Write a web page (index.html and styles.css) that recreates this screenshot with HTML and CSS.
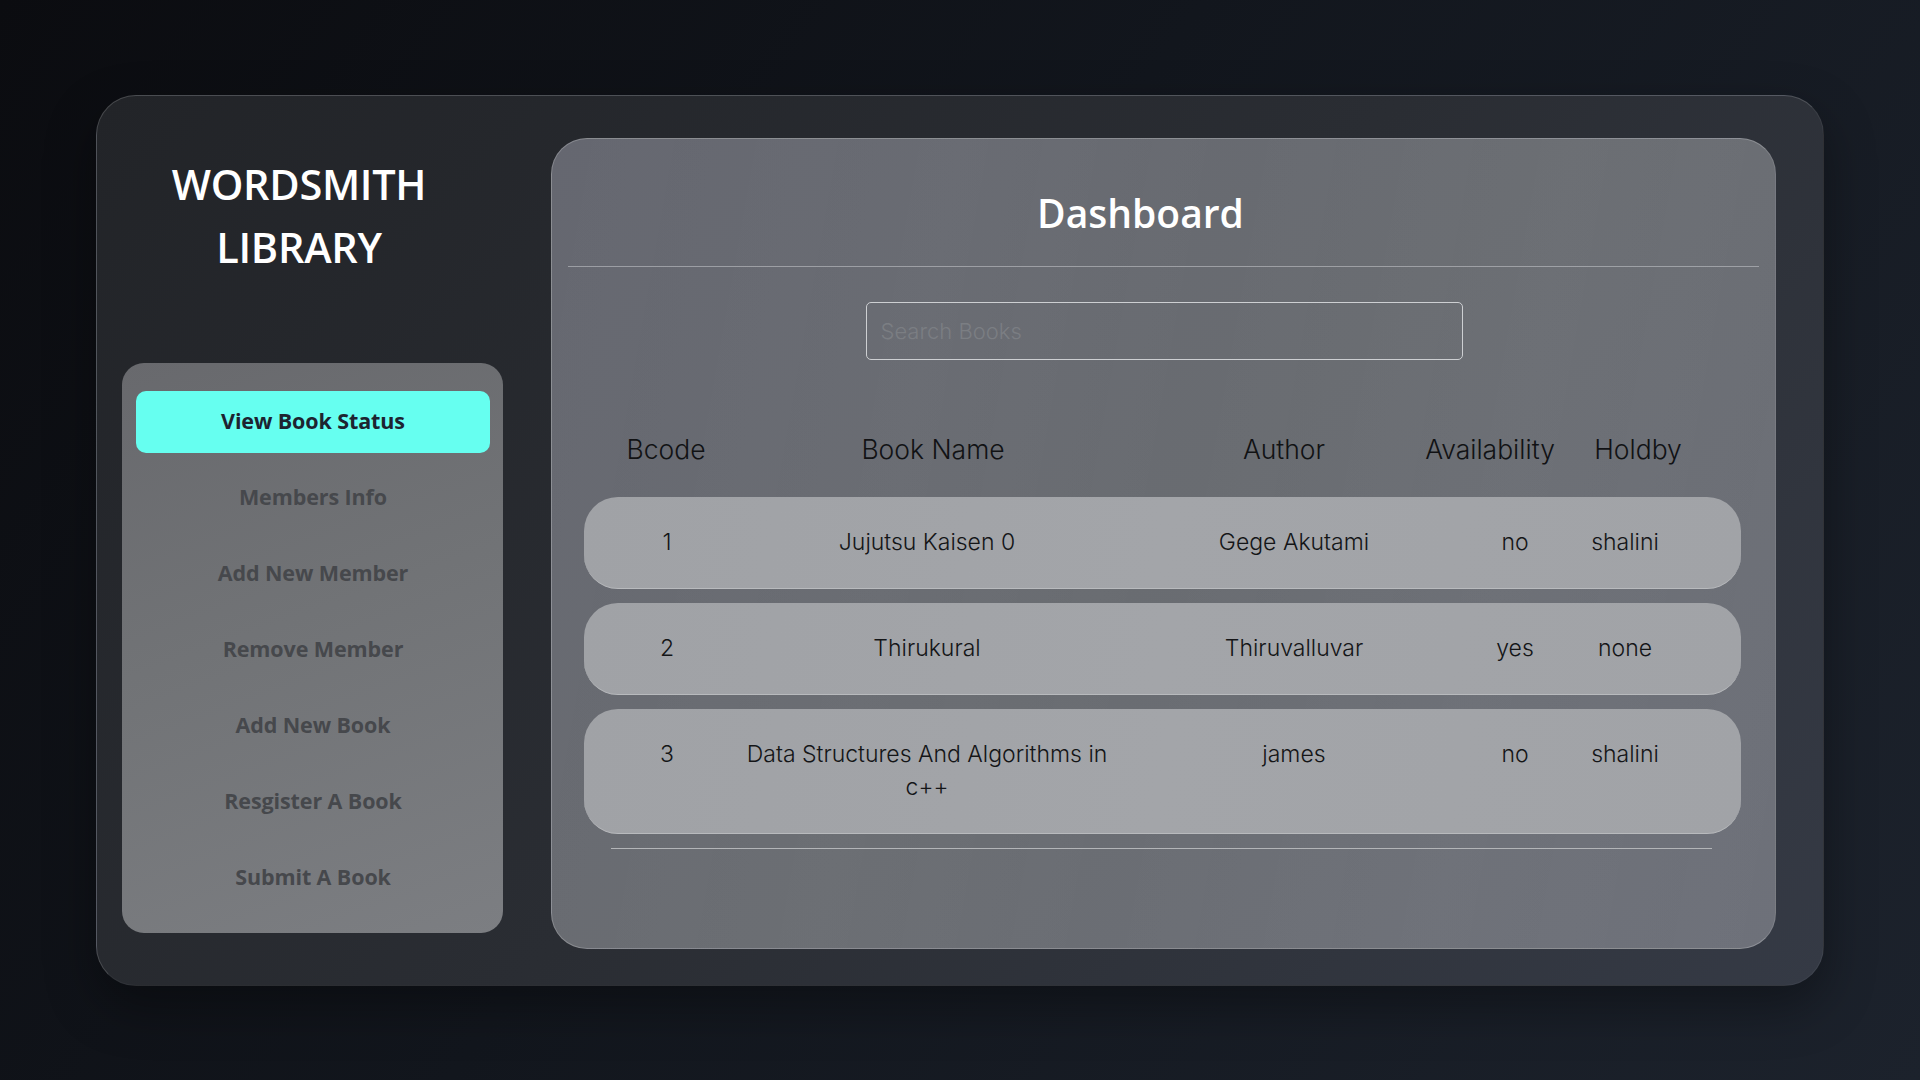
FILE: index.html
```html
<!DOCTYPE html>
<html lang="en">
<head>
<meta charset="utf-8">
<title>Wordsmith Library - Dashboard</title>
<link rel="stylesheet" href="styles.css">
</head>
<body>
<div class="app">
  <aside class="sidebar">
    <h1 class="brand">WORDSMITH<br>LIBRARY</h1>
    <nav class="nav">
      <a class="nav-item active">View Book Status</a>
      <a class="nav-item">Members Info</a>
      <a class="nav-item">Add New Member</a>
      <a class="nav-item">Remove Member</a>
      <a class="nav-item">Add New Book</a>
      <a class="nav-item">Resgister A Book</a>
      <a class="nav-item">Submit A Book</a>
    </nav>
  </aside>
  <main class="panel">
    <h2 class="panel-title">Dashboard</h2>
    <div class="divider"></div>
    <div class="search-wrap">
      <input class="search" type="text" placeholder="Search Books">
    </div>
    <div class="thead">
      <div class="th c1">Bcode</div>
      <div class="th c2">Book Name</div>
      <div class="th c3">Author</div>
      <div class="th c4">Availability</div>
      <div class="th c5">Holdby</div>
    </div>
    <div class="tbody">
      <div class="tr">
        <div class="td c1">1</div>
        <div class="td c2">Jujutsu Kaisen 0</div>
        <div class="td c3">Gege Akutami</div>
        <div class="td c4">no</div>
        <div class="td c5">shalini</div>
      </div>
      <div class="tr">
        <div class="td c1">2</div>
        <div class="td c2">Thirukural</div>
        <div class="td c3">Thiruvalluvar</div>
        <div class="td c4">yes</div>
        <div class="td c5">none</div>
      </div>
      <div class="tr">
        <div class="td c1">3</div>
        <div class="td c2">Data Structures And Algorithms in c++</div>
        <div class="td c3">james</div>
        <div class="td c4">no</div>
        <div class="td c5">shalini</div>
      </div>
    </div>
    <div class="divider-bottom"></div>
  </main>
</div>
</body>
</html>
```

FILE: styles.css
```css
* { box-sizing: border-box; }

html, body { height: 100%; }

body {
  margin: 0;
  min-height: 100vh;
  display: flex;
  align-items: center;
  justify-content: center;
  background: linear-gradient(125deg, #0b0c10 0%, #12161d 45%, #1c222c 100%);
  font-family: "Open Sans", "Noto Sans", sans-serif;
}

.app {
  width: 1728px;
  height: 891px;
  display: flex;
  gap: 48px;
  padding: 42px 47px 36px 25px;
  border-radius: 40px;
  background: linear-gradient(135deg, #222428 0%, #2a2d33 50%, #353a45 100%);
  border: 1px solid rgba(255, 255, 255, 0.16);
  border-right-color: rgba(255, 255, 255, 0.06);
  border-bottom-color: rgba(255, 255, 255, 0.04);
  box-shadow: 0 20px 50px rgba(0, 0, 0, 0.35);
}

/* Sidebar */
.sidebar {
  width: 381px;
  flex: none;
  display: flex;
  flex-direction: column;
}

.brand {
  margin: 15px 0 0;
  padding-right: 27px;
  text-align: center;
  color: #ffffff;
  font-family: "Open Sans", sans-serif;
  font-weight: 600;
  font-size: 41.5px;
  line-height: 63px;
  letter-spacing: -0.3px;
}

.nav {
  margin-top: 84px;
  height: 570px;
  padding: 28px 13px 24px 14px;
  display: flex;
  flex-direction: column;
  gap: 14px;
  border-radius: 22px;
  background: linear-gradient(160deg, #68696d 0%, #717376 45%, #7c7e82 100%);
}

.nav-item {
  height: 62px;
  flex: none;
  display: flex;
  align-items: center;
  justify-content: center;
  padding-bottom: 2px;
  border-radius: 10px;
  color: #46484c;
  font-family: "Open Sans", sans-serif;
  font-weight: 700;
  font-size: 21.5px;
  letter-spacing: -0.1px;
  text-decoration: none;
}

.nav-item.active {
  background: #66fff0;
  color: #1d2430;
}

/* Main panel */
.panel {
  flex: 1;
  display: flex;
  flex-direction: column;
  border-radius: 36px;
  border: 1px solid rgba(255, 255, 255, 0.22);
  border-right-color: rgba(255, 255, 255, 0.12);
  background:
    linear-gradient(100deg, rgba(255,255,255,0) 0%, rgba(255,255,255,0.02) 30%, rgba(255,255,255,0) 50%, rgba(255,255,255,0.02) 75%, rgba(255,255,255,0) 100%),
    linear-gradient(135deg, #656770 0%, #696c71 50%, #6e717a 100%);
}

.panel-title {
  margin: 42px 0 0;
  padding-right: 46px;
  text-align: center;
  color: #ffffff;
  font-family: "Open Sans", sans-serif;
  font-weight: 600;
  font-size: 39px;
  line-height: 63px;
}

.divider {
  margin: 22px 16px 0;
  height: 1px;
  background: rgba(200, 202, 206, 0.55);
}

.search-wrap {
  margin-top: 35px;
  display: flex;
  justify-content: center;
  padding-left: 1px;
}

.search {
  width: 597px;
  height: 58px;
  padding: 0 14px;
  border: 1px solid #cdcfd2;
  border-radius: 5px;
  background: transparent;
  outline: none;
  font-family: "Inter", sans-serif;
  font-weight: 300;
  font-size: 22px;
  color: #222;
}

.search::placeholder {
  color: #7b7e83;
}

/* Table */
.thead {
  margin: 70px 0 0 32px;
  display: grid;
  grid-template-columns: 164px 370px 296px 152px 144px;
  height: 38px;
  align-items: center;
}

.th {
  text-align: center;
  color: #111214;
  font-family: "Inter", sans-serif;
  font-weight: 300;
  font-size: 26.5px;
  line-height: 38px;
  white-space: nowrap;
}

.thead .c3 { padding-left: 36px; }

.tbody {
  margin: 29px 0 0 32px;
  width: 1157px;
  display: flex;
  flex-direction: column;
  gap: 14px;
}

.tr {
  display: grid;
  grid-template-columns: 143px 400px 334px 108px 112px;
  padding: 29px 60px 29px 0;
  border-radius: 34px;
  background: linear-gradient(100deg, #a0a2a6 0%, #a3a5a9 50%, #a1a3a7 100%);
  border-bottom: 1px solid #b8babd;
}

.td {
  text-align: center;
  color: #141517;
  font-family: "Inter", sans-serif;
  font-weight: 300;
  font-size: 23px;
  line-height: 33px;
}

.tr .c1 { padding-left: 23px; }
.tr .c2 { padding: 0 6px; }

.divider-bottom {
  margin: 14px 0 0 59px;
  width: 1101px;
  height: 1px;
  background: #b3b5b8;
}
```
